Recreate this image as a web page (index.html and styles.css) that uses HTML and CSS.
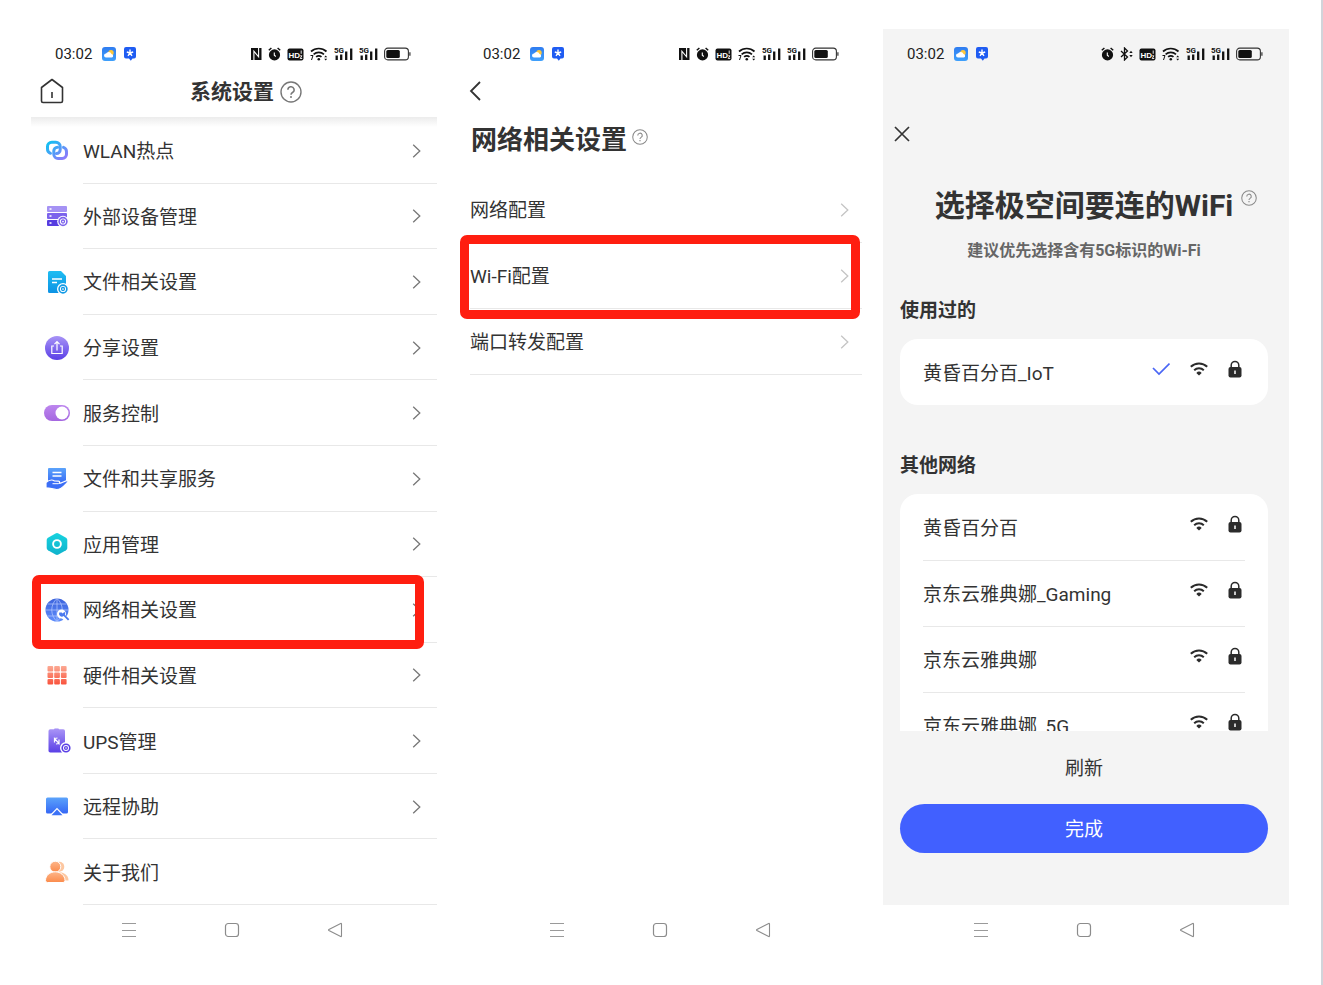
FILE: index.html
```html
<!DOCTYPE html>
<html lang="zh-CN">

<head>
    <meta charset="UTF-8">
    <meta name="viewport" content="width=device-width, initial-scale=1.0">
    <title>系统设置</title>
    <link rel="stylesheet" href="styles.css">
</head>

<body>
    <!-- shared icons -->
    <svg class="sprite" aria-hidden="true">
        <defs>
            <linearGradient id="gWeather" x1="0" y1="0" x2="0" y2="1"><stop offset="0" stop-color="#2f7cf0"/><stop offset="1" stop-color="#3fa0fb"/></linearGradient>
            <linearGradient id="gLink" gradientUnits="userSpaceOnUse" x1="6" y1="5" x2="20" y2="22"><stop offset="0" stop-color="#12c0f2"/><stop offset="1" stop-color="#8a7cfb"/></linearGradient>
            <linearGradient id="gPurple" x1="0" y1="0" x2="0" y2="1"><stop offset="0" stop-color="#a893f6"/><stop offset="1" stop-color="#5a3fe6"/></linearGradient>
            <linearGradient id="gCyan" x1="0" y1="0" x2="0" y2="1"><stop offset="0" stop-color="#1fbdf2"/><stop offset="1" stop-color="#0c92e4"/></linearGradient>
            <linearGradient id="gToggle" x1="0" y1="0" x2="0" y2="1"><stop offset="0" stop-color="#bd86ee"/><stop offset="1" stop-color="#a567e0"/></linearGradient>
            <linearGradient id="gBlue" x1="0" y1="0" x2="0" y2="1"><stop offset="0" stop-color="#5ba3fb"/><stop offset="1" stop-color="#3567f5"/></linearGradient>
            <linearGradient id="gTeal" x1="0" y1="0" x2="0" y2="1"><stop offset="0" stop-color="#17d3df"/><stop offset="1" stop-color="#0fb2cc"/></linearGradient>
            <linearGradient id="gGlobe" x1="0" y1="0" x2="0" y2="1"><stop offset="0" stop-color="#3c63dc"/><stop offset="1" stop-color="#5f8dfb"/></linearGradient>
            <linearGradient id="gRed" gradientUnits="userSpaceOnUse" x1="0" y1="4" x2="0" y2="23"><stop offset="0" stop-color="#fcae98"/><stop offset="1" stop-color="#f9553f"/></linearGradient>
            <linearGradient id="gOrange" x1="0" y1="0" x2="0" y2="1"><stop offset="0" stop-color="#fdb68a"/><stop offset="1" stop-color="#fb8a4a"/></linearGradient>
        </defs>

        <symbol id="weather" viewBox="0 0 14 14">
            <rect width="14" height="14" rx="3" fill="url(#gWeather)"/>
            <circle cx="9" cy="5.8" r="2.7" fill="#ffc83a"/>
            <path d="M4 10.600a2 2 0 0 1 0-4 3 3 0 0 1 5.500.3 1.900 1.900 0 0 1 .3 3.700z" fill="#fff"/>
        </symbol>
        <symbol id="starapp" viewBox="0 0 14 14">
            <path d="M3 0h8a2 2 0 0 1 2 2v7.500a2 2 0 0 1-2 2H9.500L7.800 13.800 6 11.500H3a2 2 0 0 1-2-2V2a2 2 0 0 1 2-2z" fill="#1f5cf2"/>
            <path d="M7 6V2.600M7 6l3.200-1M7 6l2 2.800M7 6L5 8.800M7 6L3.800 5" stroke="#fff" stroke-width="1.400" fill="none"/>
        </symbol>
        <symbol id="nfc" viewBox="0 0 12 14">
            <path d="M1 1h10.500v12H1z" fill="#111"/>
            <path d="M3.900 13V4.200l4.700 5.600V1" stroke="#fff" stroke-width="1.100" fill="none"/>
        </symbol>
        <symbol id="alarm" viewBox="0 0 13 14">
            <circle cx="6.500" cy="7.900" r="5.600" fill="#111"/>
            <path d="M.8 3.300L3.400 1M12.200 3.300L9.600 1" stroke="#111" stroke-width="1.500"/>
            <path d="M6.300 5.500v2.800l1.500 1.200" stroke="#fff" stroke-width="1.100" fill="none"/>
        </symbol>
        <symbol id="bluetooth" viewBox="0 0 13 14">
            <path d="M1 4l6.500 6L4.500 13V1l3 3L1 10" stroke="#111" stroke-width="1.300" fill="none"/>
            <path d="M9.300 6l1.700-2.200L12.700 6zM9.300 8l1.700 2.200L12.700 8z" fill="#111"/>
        </symbol>
        <symbol id="wifi6" viewBox="0 0 18 14">
            <path d="M1 4.500a11.500 11.500 0 0 1 15.500 0M3.600 7.300a8 8 0 0 1 10.400 0M6.100 9.900a4.300 4.300 0 0 1 5.400 0" stroke="#111" stroke-width="1.700" fill="none"/>
            <circle cx="8.800" cy="12.200" r="1.300" fill="#111"/>
            <path d="M.5 8.500H3L1.500 13" stroke="#111" fill="none"/>
            <path d="M14.200 10.300l1.500-1.800 1.500 1.800zM14.200 11.700l1.500 1.800 1.500-1.800z" fill="#111"/>
        </symbol>
        <symbol id="battery" viewBox="0 0 27 14">
            <rect x=".6" y="1.100" width="23.800" height="11.800" rx="3.200" fill="none" stroke="#333" stroke-width="1.100"/>
            <rect x="2.300" y="2.900" width="13.500" height="8.200" rx="1.500" fill="#111"/>
            <path d="M25.900 5.200v3.600" stroke="#333" stroke-width="1.200"/>
        </symbol>

        <symbol id="help" viewBox="0 0 22 22">
            <circle cx="11" cy="11" r="10" fill="none" stroke="currentColor" stroke-width="1.400"/>
            <path d="M7.900 8.800a3.100 3.100 0 1 1 4.600 2.700c-1 .6-1.500 1-1.500 2.300" fill="none" stroke="currentColor" stroke-width="1.500"/>
            <circle cx="11" cy="16" r="1" fill="currentColor"/>
        </symbol>
        <symbol id="chevron" viewBox="0 0 9 16">
            <path d="M1.200 1.800L7.800 8l-6.600 6.200" fill="none" stroke="currentColor" stroke-width="1.300"/>
        </symbol>
        <symbol id="wifi" viewBox="0 0 18 14">
            <path d="M.8 4.700a11.800 11.800 0 0 1 16.400 0M4.200 8.200a7 7 0 0 1 9.600 0" fill="none" stroke="#2b2b2b" stroke-width="2"/>
            <path d="M9 13.600l-2.700-2.700a3.800 3.800 0 0 1 5.400 0z" fill="#2b2b2b"/>
        </symbol>
        <symbol id="lock" viewBox="0 0 14 18">
            <path d="M3.200 8V5.200a3.800 3.800 0 0 1 7.600 0V8" fill="none" stroke="#2b2b2b" stroke-width="1.500"/>
            <rect x=".5" y="7" width="13" height="10.500" rx="2" fill="#2b2b2b"/>
            <path d="M7 10.500v3.500" stroke="#fff" stroke-width="1.500"/>
        </symbol>
        <symbol id="menu" viewBox="0 0 16 16">
            <path d="M1 1.500h14M1 8.500h14M1 14.500h14" stroke="#9a9a9a"/>
        </symbol>
        <symbol id="home" viewBox="0 0 16 16">
            <rect x="1.500" y="1.500" width="13" height="13" rx="2.800" fill="none" stroke="#8c8c8c" stroke-width="1.200"/>
        </symbol>
        <symbol id="back" viewBox="0 0 16 16">
            <path d="M14.500 2v12q0 .8-.8.500L1.900 8.500q-.8-.5 0-1L13.700 1.500q.8-.3.800.5z" fill="none" stroke="#8c8c8c" stroke-width="1.100"/>
        </symbol>
    </svg>

    <!-- icons with lettering -->
    <svg class="sprite-text" aria-hidden="true">
        <symbol id="hd" viewBox="0 0 17 14">
            <rect x=".5" y="1.500" width="16" height="12" rx="2" fill="#111"/>
            <text x="1.500" y="10.700" class="hd-text">HD</text>
            <path d="M14.200 3.500v3.300M13.200 8.800h1.700L13.200 11.500h2" stroke="#fff" stroke-width=".9" fill="none"/>
        </symbol>
        <symbol id="signal" viewBox="0 0 19 14">
            <text x="0" y="6" class="g-text">5G</text>
            <path d="M2.700 8.500V13M7.200 7.500V13M12.200 4.500V13M17.200 1.500V13" stroke="#111" stroke-width="2.300"/>
        </symbol>
    </svg>

    <main class="phones">
        <section class="phone">
            <div class="screen">
                <div class="status">
                    <span class="time">03:02</span>
                    <svg class="app"><use href="#weather"/></svg>
                    <svg class="app"><use href="#starapp"/></svg>
                    <div class="status-right">
                        <svg width="12"><use href="#nfc"/></svg>
                        <svg width="13"><use href="#alarm"/></svg>
                        <svg width="17"><use href="#hd"/></svg>
                        <svg width="18"><use href="#wifi6"/></svg>
                        <svg width="19"><use href="#signal"/></svg>
                        <svg width="19"><use href="#signal"/></svg>
                        <svg width="27"><use href="#battery"/></svg>
                    </div>
                </div>
                <header class="topbar">
                    <button type="button" class="icon-btn home-btn" aria-label="主页">
                        <svg width="24" height="26" viewBox="0 0 24 26" fill="none" stroke="#333" stroke-width="1.600" stroke-linejoin="round">
                            <path d="M1.500 9.500L12 1.500l10.500 8V23a1.500 1.500 0 0 1-1.500 1.500H3A1.500 1.500 0 0 1 1.500 23zM12 14v6"/>
                        </svg>
                    </button>
                    <h1>系统设置</h1>
                    <svg class="help-lg"><use href="#help"/></svg>
                </header>
                <ul class="settings">
                    <li><a href="#">
                        <svg class="ico" viewBox="0 0 28 28" fill="none" stroke="url(#gLink)" stroke-width="3" stroke-linecap="round">
                            <path d="M7.500 16.300A4.500 4.500 0 0 1 4.500 12V9.500A4.300 4.300 0 0 1 8.800 5.200h4.100a4.300 4.300 0 0 1 4.300 4.300v3.200a3.800 3.800 0 0 1-3.800 3.800"/>
                            <path d="M20.500 10.400A4.500 4.500 0 0 1 23.500 14.700v2.500a4.300 4.300 0 0 1-4.300 4.300h-4.100a4.300 4.300 0 0 1-4.300-4.300V14a3.800 3.800 0 0 1 3.800-3.800"/>
                        </svg>
                        <span>WLAN热点</span><svg class="chev"><use href="#chevron"/></svg></a></li>
                    <li><a href="#">
                        <svg class="ico" viewBox="0 0 28 28">
                            <rect x="4" y="4" width="20" height="6" rx="1" fill="#a592f4"/>
                            <rect x="4" y="11" width="20" height="6" rx="1" fill="#7c63ec"/>
                            <rect x="4" y="18" width="20" height="6" rx="1" fill="#563ce0"/>
                            <path d="M6.500 7h2M6.500 14h2M6.500 21h2" stroke="#fff" stroke-width="1.500"/>
                            <circle cx="20" cy="19.500" r="5.800" fill="#fff"/>
                            <circle cx="20" cy="19.500" r="3.900" fill="#fff" stroke="#7c63ec" stroke-width="1.600"/>
                            <circle cx="20" cy="19.500" r="1.500" fill="none" stroke="#7c63ec" stroke-width="1.300"/>
                        </svg>
                        <span>外部设备管理</span><svg class="chev"><use href="#chevron"/></svg></a></li>
                    <li><a href="#">
                        <svg class="ico" viewBox="0 0 28 28">
                            <path d="M6.500 3H18l5 5v15.500a1.500 1.500 0 0 1-1.500 1.500h-15A1.500 1.500 0 0 1 5 23.500v-19A1.500 1.500 0 0 1 6.500 3z" fill="url(#gCyan)"/>
                            <path d="M9 11h10M9 14.500h5" stroke="#fff" stroke-width="1.300"/>
                            <circle cx="20" cy="21" r="6" fill="#fff"/>
                            <circle cx="20" cy="21" r="3.900" fill="#fff" stroke="#119ae6" stroke-width="1.600"/>
                            <circle cx="20" cy="21" r="1.500" fill="none" stroke="#119ae6" stroke-width="1.300"/>
                        </svg>
                        <span>文件相关设置</span><svg class="chev"><use href="#chevron"/></svg></a></li>
                    <li><a href="#">
                        <svg class="ico" viewBox="0 0 28 28">
                            <circle cx="14" cy="14" r="12" fill="url(#gPurple)"/>
                            <path d="M11 12H8.800v7.500h10.400V12H17M14 16.500V8M11.500 10.200L14 7.700l2.500 2.500" fill="none" stroke="#fff" stroke-width="1.200"/>
                        </svg>
                        <span>分享设置</span><svg class="chev"><use href="#chevron"/></svg></a></li>
                    <li><a href="#">
                        <svg class="ico" viewBox="0 0 28 28">
                            <rect x="1" y="6" width="26" height="16" rx="8" fill="url(#gToggle)"/>
                            <circle cx="19" cy="14" r="6.500" fill="#fff"/>
                        </svg>
                        <span>服务控制</span><svg class="chev"><use href="#chevron"/></svg></a></li>
                    <li><a href="#">
                        <svg class="ico" viewBox="0 0 28 28">
                            <path d="M6 3h16a1 1 0 0 1 1 1v15H5V4a1 1 0 0 1 1-1z" fill="url(#gBlue)"/>
                            <path d="M9.500 7.500h9M9.500 11h9" stroke="#fff" stroke-width="1.400"/>
                            <path d="M3 17.500c3-2.500 6-3.300 8.500-1.500l4 .2c1.600.1 1.600 2 0 2.300 3.500 0 5.500-2.500 8.500-2.800 1-.1 1.300.8.600 1.500-3 3-6 7.300-11 7.300-4 0-6-1.700-10.600-1.700z" fill="#3b6ef6" stroke="#fff" stroke-width="1.200"/>
                            <path d="M9.500 18.700h6" stroke="#fff"/>
                        </svg>
                        <span>文件和共享服务</span><svg class="chev"><use href="#chevron"/></svg></a></li>
                    <li><a href="#">
                        <svg class="ico" viewBox="0 0 28 28">
                            <path d="M12.500 3.500q1.500-.8 3 0l7.500 4.200q1.300.8 1.300 2.300v8q0 1.500-1.300 2.300l-7.500 4.200q-1.500.8-3 0L5 20.300Q3.700 19.500 3.700 18v-8q0-1.500 1.300-2.300z" fill="url(#gTeal)"/>
                            <circle cx="14" cy="14" r="3.900" fill="none" stroke="#fff" stroke-width="1.900"/>
                        </svg>
                        <span>应用管理</span><svg class="chev"><use href="#chevron"/></svg></a></li>
                    <li class="marked"><a href="#">
                        <svg class="ico" viewBox="0 0 28 28">
                            <circle cx="14" cy="14" r="11.500" fill="url(#gGlobe)"/>
                            <path d="M2.500 14h23M4.500 8h19M4.500 20h19M14 2.500v23M14 2.500c-7 6-7 17 0 23M14 2.500c7 6 7 17 0 23" fill="none" stroke="#b9ccff" stroke-width=".7"/>
                            <path d="M20 20l5.500 5.500" stroke="#fff" stroke-width="4.800"/>
                            <circle cx="18.500" cy="18" r="4.500" fill="#fff"/>
                            <path d="M16.300 16.500a2.900 2.900 0 0 0 4.300 3.600l4.400 4.400 1.300-1.300-4.400-4.400a3 3 0 0 0-.4-3l-1.800 1.700-1-.9z" fill="#4a78ee"/>
                        </svg>
                        <span>网络相关设置</span><svg class="chev"><use href="#chevron"/></svg></a></li>
                    <li><a href="#">
                        <svg class="ico" viewBox="0 0 28 28" fill="url(#gRed)">
                            <rect x="4.500" y="5" width="5.700" height="5.500" rx="1"/><rect x="11.200" y="5" width="5.700" height="5.500" rx="1"/><rect x="17.900" y="5" width="5.700" height="5.500" rx="1"/>
                            <rect x="4.500" y="11.500" width="5.700" height="5.500" rx="1"/><rect x="11.200" y="11.500" width="5.700" height="5.500" rx="1"/><rect x="17.900" y="11.500" width="5.700" height="5.500" rx="1"/>
                            <rect x="4.500" y="18" width="5.700" height="5.500" rx="1"/><rect x="11.200" y="18" width="5.700" height="5.500" rx="1"/><rect x="17.900" y="18" width="5.700" height="5.500" rx="1"/>
                        </svg>
                        <span>硬件相关设置</span><svg class="chev"><use href="#chevron"/></svg></a></li>
                    <li><a href="#">
                        <svg class="ico" viewBox="0 0 28 28">
                            <rect x="11" y="1.500" width="5" height="3" rx="1" fill="#9d88f3"/>
                            <rect x="5.500" y="2.300" width="16.500" height="23.200" rx="1.800" fill="url(#gPurple)"/>
                            <path d="M11.500 15.500v-4l4.500 5v-4M11.500 11.500l3-.5M16 16.500l-3 .5" stroke="#fff" stroke-width="1.200" fill="none"/>
                            <circle cx="23" cy="21" r="6" fill="#fff"/>
                            <circle cx="23" cy="21" r="3.800" fill="#fff" stroke="#5a3fe6" stroke-width="1.600"/>
                            <circle cx="23" cy="21" r="1.400" fill="none" stroke="#5a3fe6" stroke-width="1.300"/>
                        </svg>
                        <span>UPS管理</span><svg class="chev"><use href="#chevron"/></svg></a></li>
                    <li><a href="#">
                        <svg class="ico" viewBox="0 0 28 28">
                            <path d="M4.500 4.500h19A1.500 1.500 0 0 1 25 6v13a1.500 1.500 0 0 1-1.500 1.500h-19A1.500 1.500 0 0 1 3 19V6a1.500 1.500 0 0 1 1.500-1.500z" fill="url(#gBlue)"/>
                            <path d="M6.500 22.500l7.500-7.800 7.500 7.800z" fill="#fff"/>
                            <path d="M8.500 22.300L14 16.500l5.500 5.800z" fill="#3c72f6"/>
                        </svg>
                        <span>远程协助</span><svg class="chev"><use href="#chevron"/></svg></a></li>
                    <li><a href="#">
                        <svg class="ico" viewBox="0 0 28 28">
                            <circle cx="16.300" cy="8.700" r="5" fill="#fdc7a0"/>
                            <path d="M14 14c7 0 11.500 3 11.500 8.500H14z" fill="#fdc7a0"/>
                            <circle cx="12.300" cy="8.700" r="5.500" fill="url(#gOrange)" stroke="#fff"/>
                            <path d="M2.500 22.500c0-5 4.300-8.700 9.700-8.700s9.800 3.700 9.800 8.700q0 2-2 2H4.500q-2 0-2-2z" fill="url(#gOrange)" stroke="#fff"/>
                        </svg>
                        <span>关于我们</span></a></li>
                </ul>
            </div>
            <nav class="navbar">
                <svg><use href="#menu"/></svg>
                <svg><use href="#home"/></svg>
                <svg><use href="#back"/></svg>
            </nav>
        </section>

        <section class="phone">
            <div class="screen">
                <div class="status">
                    <span class="time">03:02</span>
                    <svg class="app"><use href="#weather"/></svg>
                    <svg class="app"><use href="#starapp"/></svg>
                    <div class="status-right">
                        <svg width="12"><use href="#nfc"/></svg>
                        <svg width="13"><use href="#alarm"/></svg>
                        <svg width="17"><use href="#hd"/></svg>
                        <svg width="18"><use href="#wifi6"/></svg>
                        <svg width="19"><use href="#signal"/></svg>
                        <svg width="19"><use href="#signal"/></svg>
                        <svg width="27"><use href="#battery"/></svg>
                    </div>
                </div>
                <button type="button" class="icon-btn back-btn" aria-label="返回">
                    <svg width="12" height="20" viewBox="0 0 12 20" fill="none" stroke="#333" stroke-width="1.800">
                        <path d="M11 1L2 10l9 9"/>
                    </svg>
                </button>
                <div class="page-title">
                    <h2>网络相关设置</h2>
                    <svg class="help-sm"><use href="#help"/></svg>
                </div>
                <ul class="config">
                    <li><a href="#"><span>网络配置</span><svg class="chev"><use href="#chevron"/></svg></a></li>
                    <li class="marked"><a href="#"><span>Wi-Fi配置</span><svg class="chev"><use href="#chevron"/></svg></a></li>
                    <li><a href="#"><span>端口转发配置</span><svg class="chev"><use href="#chevron"/></svg></a></li>
                </ul>
            </div>
            <nav class="navbar">
                <svg><use href="#menu"/></svg>
                <svg><use href="#home"/></svg>
                <svg><use href="#back"/></svg>
            </nav>
        </section>

        <section class="phone">
            <div class="screen gray">
                <div class="status">
                    <span class="time">03:02</span>
                    <svg class="app"><use href="#weather"/></svg>
                    <svg class="app"><use href="#starapp"/></svg>
                    <div class="status-right">
                        <svg width="13"><use href="#alarm"/></svg>
                        <svg width="13"><use href="#bluetooth"/></svg>
                        <svg width="17"><use href="#hd"/></svg>
                        <svg width="18"><use href="#wifi6"/></svg>
                        <svg width="19"><use href="#signal"/></svg>
                        <svg width="19"><use href="#signal"/></svg>
                        <svg width="27"><use href="#battery"/></svg>
                    </div>
                </div>
                <button type="button" class="icon-btn close-btn" aria-label="关闭">
                    <svg width="16" height="16" viewBox="0 0 16 16" fill="none" stroke="#333" stroke-width="1.700">
                        <path d="M1 1l14 14M15 1L1 15"/>
                    </svg>
                </button>
                <div class="wifi-page">
                    <h2 class="wifi-title">选择极空间要连的WiFi<svg class="help-sm"><use href="#help"/></svg></h2>
                    <p class="subtitle">建议优先选择含有5G标识的Wi-Fi</p>

                    <h3>使用过的</h3>
                    <ul class="card">
                        <li>
                            <span>黄昏百分百_IoT</span>
                            <div class="marks">
                                <svg width="18" height="14" viewBox="0 0 18 14" fill="none" stroke="#4a66f5" stroke-width="1.700"><path d="M1 6l6 6L17.500 1.500"/></svg>
                                <svg width="18" height="14"><use href="#wifi"/></svg>
                                <svg width="14" height="18"><use href="#lock"/></svg>
                            </div>
                        </li>
                    </ul>

                    <h3 class="others">其他网络</h3>
                    <ul class="card scroll">
                        <li><span>黄昏百分百</span><div class="marks"><svg width="18" height="14"><use href="#wifi"/></svg><svg width="14" height="18"><use href="#lock"/></svg></div></li>
                        <li><span>京东云雅典娜_Gaming</span><div class="marks"><svg width="18" height="14"><use href="#wifi"/></svg><svg width="14" height="18"><use href="#lock"/></svg></div></li>
                        <li><span>京东云雅典娜</span><div class="marks"><svg width="18" height="14"><use href="#wifi"/></svg><svg width="14" height="18"><use href="#lock"/></svg></div></li>
                        <li><span>京东云雅典娜_5G</span><div class="marks"><svg width="18" height="14"><use href="#wifi"/></svg><svg width="14" height="18"><use href="#lock"/></svg></div></li>
                    </ul>

                    <button type="button" class="refresh">刷新</button>
                    <button type="button" class="done">完成</button>
                </div>
            </div>
            <nav class="navbar">
                <svg><use href="#menu"/></svg>
                <svg><use href="#home"/></svg>
                <svg><use href="#back"/></svg>
            </nav>
        </section>
    </main>
</body>

</html>
```
FILE: styles.css
```css
* {
    box-sizing: border-box;
}

body {
    margin: 0;
    background-color: #fff;
    color: #333;
    font-family: Roboto, "Noto Sans CJK SC", sans-serif;
    font-size: 19px;
    line-height: 26px;
}

h1, h2, h3, p, ul {
    margin: 0;
    padding: 0;
}

ul {
    list-style: none;
}

a {
    color: inherit;
    text-decoration: none;
}

button {
    border: none;
    background: none;
    padding: 0;
    color: inherit;
    font: inherit;
    cursor: pointer;
}

svg {
    display: block;
    flex-shrink: 0;
}

.sprite {
    position: absolute;
    width: 0;
    height: 0;
}

.sprite-text {
    display: none;
}

.phones {
    display: flex;
    height: 100vh;
    min-height: 860px;
    padding: 29px 32px 0 31px;
    border-right: 2px solid #d2d4da;
}

.phone {
    flex: 1;
    min-width: 0;
    display: flex;
    flex-direction: column;
}

.phone:nth-child(1) {
    margin-right: 22px;
}

.phone:nth-child(2) {
    margin-right: 18px;
}

.screen {
    flex: 1;
    min-height: 0;
    display: flex;
    flex-direction: column;
}

.gray {
    background-color: #f4f4f4;
}

/* status bar */
.status {
    display: flex;
    align-items: center;
    height: 50px;
    padding: 0 26px 0 24px;
}

.time {
    width: 47px;
    font-size: 15px;
    color: #222;
}

.app {
    width: 14px;
    height: 14px;
    margin-right: 7px;
}

.status-right {
    display: flex;
    gap: 6px;
    margin-left: auto;
}

.status-right svg {
    height: 14px;
}

.hd-text {
    font: bold 8px "Liberation Sans", sans-serif;
    fill: #fff;
}

.g-text {
    font: bold 8px Roboto, sans-serif;
    fill: #111;
}

.icon-btn {
    display: flex;
    align-items: center;
    align-self: flex-start;
    height: 24px;
}

/* system settings */
.topbar {
    position: relative;
    display: flex;
    align-items: center;
    justify-content: center;
    height: 39px;
    padding: 0 0 12px 24px;
    border-bottom: 1px solid #c4c4c4;
}

.topbar::after {
    content: "";
    position: absolute;
    left: 0;
    right: 0;
    top: 100%;
    height: 10px;
    background: linear-gradient(#ececec, #fff);
}

.home-btn {
    position: absolute;
    left: 9px;
    top: 0;
}

h1 {
    font-size: 21px;
}

.help-lg {
    width: 22px;
    height: 22px;
    margin-left: 6px;
    color: #777;
}

.settings {
    flex: 1;
    display: grid;
    grid-auto-rows: 1fr;
}

.settings li,
.config li {
    position: relative;
}

.settings a {
    display: flex;
    align-items: center;
    height: 100%;
    padding-left: 12px;
}

li span {
    padding-top: 3px;
}

.settings span {
    flex: 1;
}

.ico {
    width: 28px;
    height: 28px;
    margin-right: 12px;
}

.chev {
    width: 9px;
    height: 16px;
    margin-right: 16px;
    color: #777;
}

.settings li::after {
    content: "";
    position: absolute;
    left: 52px;
    right: 0;
    bottom: 0;
    border-bottom: 1px solid #e8e8e8;
}

.marked::before {
    content: "";
    position: absolute;
    z-index: 2;
    border: 9px solid #ff1e10;
    border-radius: 7px;
    pointer-events: none;
}

.settings .marked::before {
    inset: -2px 13px -6px 1px;
}

/* network settings */
.back-btn {
    margin-left: 10px;
}

.page-title {
    display: flex;
    margin: 19px 0 19px 12px;
}

.page-title h2 {
    font-size: 26px;
    line-height: 36px;
}

.help-sm {
    width: 16px;
    height: 16px;
    margin: 7px 0 0 5px;
    color: #888;
}

.config {
    margin: 0 3px 0 11px;
}

.config a {
    display: flex;
    align-items: center;
    justify-content: space-between;
    height: 66px;
    border-bottom: 1px solid #e8e8e8;
}

.config .chev {
    margin-right: 13px;
    color: #c4c4c4;
}

.config .marked::before {
    inset: -8px 2px -10px -10px;
}

/* wifi picker */
.close-btn {
    margin: 43px 0 0 11px;
}

.wifi-page {
    flex: 1;
    min-height: 0;
    display: flex;
    flex-direction: column;
    padding: 40px 21px 52px 17px;
}

.wifi-title {
    position: relative;
    align-self: center;
    font-size: 30px;
    line-height: 40px;
}

.wifi-title .help-sm {
    position: absolute;
    left: 100%;
    top: -3px;
    margin-left: 8px;
}

.subtitle {
    margin: 12px 0 34px;
    color: #666;
    font-size: 16px;
    font-weight: bold;
    text-align: center;
}

h3 {
    margin-bottom: 15px;
    font-size: 19px;
}

.others {
    margin-top: 48px;
}

.card {
    padding: 0 23px;
    border-radius: 18px;
    background-color: #fff;
}

.card li {
    display: flex;
    align-items: center;
    justify-content: space-between;
    height: 66px;
}

.card li + li {
    border-top: 1px solid #e8e8e8;
}

.marks {
    display: flex;
    align-items: center;
    gap: 20px;
    margin: 0 3px 7px 0;
}

.scroll {
    flex: 1;
    min-height: 0;
    overflow: hidden;
    border-radius: 18px 18px 0 0;
}

.refresh {
    height: 73px;
    padding-top: 3px;
}

.done {
    height: 49px;
    padding-top: 2px;
    border-radius: 25px;
    background-color: #4160ff;
    color: #fff;
}

/* system navigation */
.navbar {
    display: flex;
    justify-content: center;
    gap: 87px;
    height: 80px;
    padding: 17px 4px 0 0;
}

.navbar svg {
    width: 16px;
    height: 16px;
}
```
